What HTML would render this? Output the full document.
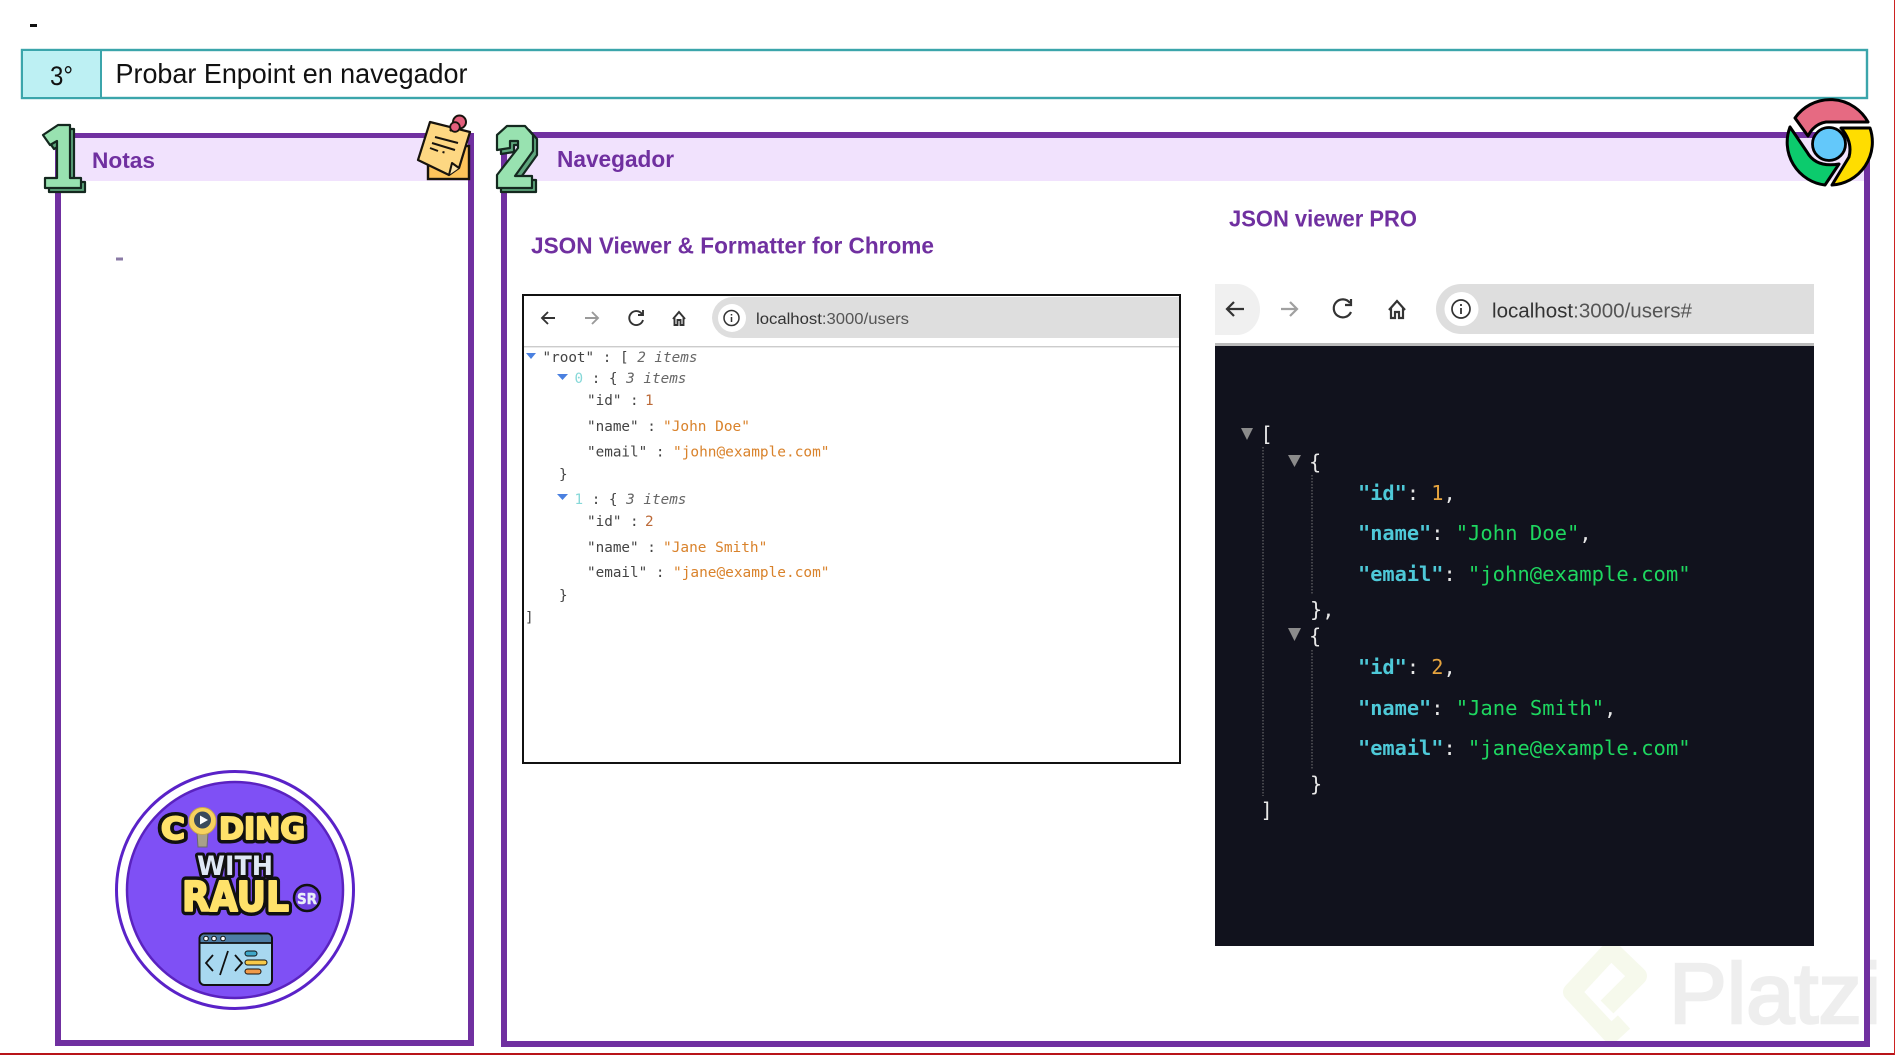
<!DOCTYPE html>
<html lang="es"><head><meta charset="utf-8"><title>Probar Enpoint en navegador</title>
<style>
html,body{margin:0;padding:0;background:#fff;width:1895px;height:1055px;overflow:hidden}
svg{display:block}
text{white-space:pre}
.s{font-family:"Liberation Sans",sans-serif}
.t{font-family:"Liberation Sans",sans-serif;font-weight:700;fill:#7030a0}
.m1{font-family:"DejaVu Sans Mono","Liberation Mono",monospace;font-size:14.3px;fill:#444}
.m2{font-family:"DejaVu Sans Mono","Liberation Mono",monospace;font-size:20.3px;fill:#e8e8e8}
.k{fill:#4ec9d8;font-weight:700}.g{fill:#1ed760;font-size:20.55px}.o{fill:#e5a33e}
.v{fill:#d9822b;font-size:14.45px}.n{fill:#bc6a38}.i{font-style:italic;fill:#666}
.lg{font-family:"DejaVu Sans","Liberation Sans",sans-serif;font-weight:700;stroke-linejoin:round}
.bk{fill:#111;stroke:#111}
</style></head><body>
<svg width="1895" height="1055" viewBox="0 0 1895 1055" xmlns="http://www.w3.org/2000/svg">
<rect width="1895" height="1055" fill="#fff"/>
<!-- platzi watermark -->
<path d="M1624 1022L1611 1034L1572 992L1611 950L1638 976L1607 1007" fill="none" stroke="#f6f9ec" stroke-width="18" stroke-linejoin="round"/>
<text x="1669" y="1023" class="s" font-size="85" fill="#eeeeee" stroke="#eeeeee" stroke-width="2.5" textLength="212" lengthAdjust="spacingAndGlyphs">Platzi</text>
<!-- edges -->
<rect x="0" y="1053" width="1895" height="2" fill="#b81419"/>
<rect x="1894" y="0" width="1" height="1055" fill="#c22"/>
<!-- top -->
<rect x="30" y="24" width="7" height="3" fill="#111"/>
<rect x="22" y="50" width="1845" height="48" fill="#fff" stroke="#3ba5ab" stroke-width="2.4"/>
<rect x="23" y="51" width="78" height="46" fill="#bdf0f3"/>
<rect x="100" y="50" width="2" height="48" fill="#3ba5ab"/>
<text x="50" y="85" class="s" font-size="27" fill="#111" textLength="23" lengthAdjust="spacingAndGlyphs">3°</text>
<text x="115.500" y="83" class="s" font-size="27.5" fill="#111" textLength="352" lengthAdjust="spacingAndGlyphs">Probar Enpoint en navegador</text>
<!-- notes panel -->
<rect x="58" y="136" width="413" height="907" fill="none" stroke="#7030a0" stroke-width="6"/>
<rect x="61" y="138" width="407" height="43" fill="#f1e2fd"/>
<text x="92" y="168" class="t" font-size="22" textLength="63" lengthAdjust="spacingAndGlyphs">Notas</text>
<rect x="116" y="257.500" width="7" height="3" fill="#8a7aa5"/>
<!-- nav panel -->
<rect x="504" y="135" width="1363" height="909" fill="none" stroke="#7030a0" stroke-width="6"/>
<rect x="507" y="138" width="1357" height="43" fill="#f1e2fd"/>
<text x="557" y="167" class="t" font-size="23" textLength="117" lengthAdjust="spacingAndGlyphs">Navegador</text>
<text x="531" y="253.500" class="t" font-size="23" textLength="403" lengthAdjust="spacingAndGlyphs">JSON Viewer &amp; Formatter for Chrome</text>
<text x="1229" y="226.500" class="t" font-size="23" textLength="188" lengthAdjust="spacingAndGlyphs">JSON viewer PRO</text>

<!-- number 1 -->
<g stroke="#14281f" stroke-width="2.2" stroke-linejoin="round">
<path d="M47 139L62 129L74 129L74 182L85 182L85 192L49 192L49 182L61 182L61 145L54 149Z" fill="#5ea67d"/>
<path d="M43 135L58 125L70 125L70 178L81 178L81 188L45 188L45 178L57 178L57 141L50 145Z" fill="#98e2b0"/>
</g>
<!-- number 2 -->
<g stroke="#14281f" stroke-width="2.2" stroke-linejoin="round">
<path d="M501 154L501 139L511 130L529 130L537 139L537 155L519 180L536 180L536 192L501 192L501 179L522 152L522 145L514 145L514 152Z" fill="#5ea67d"/>
<path d="M497 150L497 135L507 126L525 126L533 135L533 151L515 176L532 176L532 188L497 188L497 175L518 148L518 141L510 141L510 148Z" fill="#98e2b0"/>
</g>
<!-- sticky note -->
<rect x="428" y="146" width="41" height="33" fill="#fdc45b" stroke="#17130d" stroke-width="2.4"/>
<path d="M430 122L470 132L459 168L449 175L418 160Z" fill="#fdd782" stroke="#17130d" stroke-width="2.2" stroke-linejoin="round"/>
<path d="M449 175L452 163L459 168" fill="#fbe3a8" stroke="#17130d" stroke-width="2" stroke-linejoin="round"/>
<path d="M435 137L458 143M432 143L455 150M430 148L438 151M442.500 152L444.500 152.500" stroke="#17130d" stroke-width="2" fill="none"/>
<path d="M450 131L456 125" stroke="#17130d" stroke-width="2.5"/>
<circle cx="459.500" cy="122" r="6.500" fill="#e35f7d" stroke="#17130d" stroke-width="2"/>
<circle cx="455" cy="127" r="4.800" fill="#e35f7d" stroke="#17130d" stroke-width="1.800"/>
<!-- chrome -->
<g stroke="#000" stroke-width="3" stroke-linejoin="round">
<path d="M1795 118A43 43 0 0 1 1868 122L1826 122Q1814 124 1808 136Z" fill="#e66a82"/>
<path d="M1870 128A43 43 0 0 1 1832 185L1849 157Q1853 142 1841 128Z" fill="#ffdd00"/>
<path d="M1790 127A43 43 0 0 0 1825 185L1839 164Q1816 168 1807 152Z" fill="#0ccb6d"/>
</g>
<circle cx="1829" cy="144" r="16.500" fill="#63c8fa" stroke="#000" stroke-width="2.800"/>

<!-- left browser -->
<rect x="523" y="295" width="657" height="468" fill="#fff" stroke="#111" stroke-width="2"/>
<path d="M712 318A21 21 0 0 1 733 297H1179V338H733A21 21 0 0 1 712 318Z" fill="#dedede"/>
<circle cx="732" cy="318" r="14" fill="#fff"/>
<circle cx="731.5" cy="318" r="7.5" fill="none" stroke="#333" stroke-width="1.5"/>
<path d="M731.5 317V322M731.5 314V315.5" stroke="#333" stroke-width="1.5"/>
<rect x="524" y="346" width="655" height="1.4" fill="#ccc"/>
<g fill="none" stroke="#333" stroke-width="1.9">
<path d="M555 318H542M548 312L542 318L548 324"/>
<path d="M585 318H598M592 312L598 318L592 324" stroke="#9a9a9a"/>
<path d="M642 314A7 7 0 1 0 643 320M643 310V315H638"/>
<path d="M673 319L679 312L685 319M674.500 318V325H677.500V320H680.500V325H683.500V318"/>
</g>
<text x="756" y="324" class="s" font-size="15.500" fill="#333" textLength="153" lengthAdjust="spacingAndGlyphs">localhost<tspan fill="#555">:3000/users</tspan></text>
<path d="M526 353H536L531 359Z" fill="#4a80e0"/>
<path d="M557 374H568L562.500 380Z" fill="#4a80e0"/>
<path d="M557 494H568L562.500 500Z" fill="#4a80e0"/>
<g class="m1">
<text class="m1" x="542.500" y="362">"root" : [ <tspan class="i">2 items</tspan></text>
<text class="m1" x="574.500" y="383"><tspan fill="#86d8d8">0</tspan> : { <tspan class="i">3 items</tspan></text>
<text class="m1" x="587" y="405">"id" :<tspan x="645" class="n">1</tspan></text>
<text class="m1" x="587" y="431">"name" :<tspan x="663" class="v">"John Doe"</tspan></text>
<text class="m1" x="587" y="456.500">"email" :<tspan x="673" class="v">"john@example.com"</tspan></text>
<text class="m1" x="559" y="479">}</text>
<text class="m1" x="574.500" y="504"><tspan fill="#86d8d8">1</tspan> : { <tspan class="i">3 items</tspan></text>
<text class="m1" x="587" y="526">"id" :<tspan x="645" class="n">2</tspan></text>
<text class="m1" x="587" y="552">"name" :<tspan x="663" class="v">"Jane Smith"</tspan></text>
<text class="m1" x="587" y="577">"email" :<tspan x="673" class="v">"jane@example.com"</tspan></text>
<text class="m1" x="559" y="600">}</text>
<text class="m1" x="525" y="622">]</text>
</g>

<!-- right browser -->
<path d="M1215 284H1237A23 25.500 0 0 1 1237 335H1215Z" fill="#f0f0f0"/>
<path d="M1436 309A25 25 0 0 1 1461 284H1814V334H1461A25 25 0 0 1 1436 309Z" fill="#dedede"/>
<circle cx="1461.500" cy="309" r="17" fill="#fff"/>
<circle cx="1461" cy="309" r="9" fill="none" stroke="#333" stroke-width="1.700"/>
<path d="M1461 308V314M1461 304V306" stroke="#333" stroke-width="1.800"/>
<rect x="1215" y="343" width="599" height="3" fill="#bbb"/>
<g fill="none" stroke="#333" stroke-width="2.200">
<path d="M1244 309H1227M1234 302L1227 309L1234 316"/>
<path d="M1281 309H1297M1290 302L1297 309L1290 316" stroke="#a0a0a0"/>
<path d="M1350 303A9 9 0 1 0 1351 312M1351 299V305H1345"/>
<path d="M1389 310L1397 301L1405 310M1391 308V318H1395V312H1399V318H1403V308"/>
</g>
<text x="1492" y="317.500" class="s" font-size="20.500" fill="#333" textLength="200" lengthAdjust="spacingAndGlyphs">localhost<tspan fill="#555">:3000/users#</tspan></text>
<rect x="1215" y="346" width="599" height="600" fill="#11121d"/>
<path d="M1263 447V796M1312 475V595M1312 650V770" stroke="#777" stroke-width="1" stroke-dasharray="1.500 1.500" fill="none"/>
<path d="M1241 428H1253L1247 440Z M1288 455H1301L1294.500 467Z M1288 628H1301L1294.500 641Z" fill="#8b8b8b"/>
<g>
<text class="m2" x="1260.500" y="441">[</text>
<text class="m2" x="1309" y="469">{</text>
<text class="m2" x="1358" y="500"><tspan class="k">"id"</tspan>: <tspan class="o">1</tspan>,</text>
<text class="m2" x="1358" y="540"><tspan class="k">"name"</tspan>: <tspan class="g">"John Doe"</tspan>,</text>
<text class="m2" x="1358" y="581"><tspan class="k">"email"</tspan>: <tspan class="g">"john@example.com"</tspan></text>
<text class="m2" x="1310" y="616.500">},</text>
<text class="m2" x="1309" y="643">{</text>
<text class="m2" x="1358" y="674"><tspan class="k">"id"</tspan>: <tspan class="o">2</tspan>,</text>
<text class="m2" x="1358" y="715"><tspan class="k">"name"</tspan>: <tspan class="g">"Jane Smith"</tspan>,</text>
<text class="m2" x="1358" y="755"><tspan class="k">"email"</tspan>: <tspan class="g">"jane@example.com"</tspan></text>
<text class="m2" x="1310" y="791">}</text>
<text class="m2" x="1260.500" y="817">]</text>
</g>

<!-- logo -->
<circle cx="235" cy="890" r="118.500" fill="#fff" stroke="#5a22c8" stroke-width="3"/>
<circle cx="235" cy="890" r="108" fill="#7f50f5" stroke="#5a22c0" stroke-width="2.500"/>
<g class="lg" font-size="30">
<text x="161" y="839" class="lg bk" font-size="30" stroke-width="9" textLength="24" lengthAdjust="spacingAndGlyphs">C</text>
<text x="219" y="839" class="lg bk" font-size="30" stroke-width="9" textLength="86" lengthAdjust="spacingAndGlyphs">DING</text>
<text x="161" y="839" class="lg" font-size="30" fill="#ffe26a" stroke="#ffe26a" stroke-width="2" textLength="24" lengthAdjust="spacingAndGlyphs">C</text>
<text x="219" y="839" class="lg" font-size="30" fill="#ffe26a" stroke="#ffe26a" stroke-width="2" textLength="86" lengthAdjust="spacingAndGlyphs">DING</text>
</g>
<path d="M197 833H208L207 847H198Z" fill="#a8a08a" stroke="#6a6a6a"/>
<circle cx="202.500" cy="821" r="13.500" fill="#f7d25e" stroke="#c9a84a" stroke-width="1"/>
<circle cx="202.500" cy="820" r="8.500" fill="#3a4a5c"/>
<path d="M200 815.500L208 820L200 824.500Z" fill="#fff"/>
<text x="197" y="875" class="lg bk" font-size="27" stroke-width="6" textLength="76" lengthAdjust="spacingAndGlyphs">WITH</text>
<text x="197" y="875" class="lg" font-size="27" fill="#dfe8f5" textLength="76" lengthAdjust="spacingAndGlyphs">WITH</text>
<text x="182" y="911" class="lg bk" font-size="41" stroke-width="9" textLength="107" lengthAdjust="spacingAndGlyphs">RAUL</text>
<text x="182" y="911" class="lg" font-size="41" fill="#ffe26a" stroke="#ffe26a" stroke-width="2" textLength="107" lengthAdjust="spacingAndGlyphs">RAUL</text>
<circle cx="307" cy="898" r="13" fill="#6f3fe0" stroke="#111" stroke-width="2.500"/>
<text x="297" y="904" class="lg" font-size="15" fill="#e8eef8" stroke="#e8eef8" stroke-width=".5" textLength="20" lengthAdjust="spacingAndGlyphs">SR</text>
<rect x="199.500" y="933.500" width="72.500" height="51.500" rx="5" fill="#a8d8f0" stroke="#111" stroke-width="2"/>
<path d="M200.500 943V938.500A4 4 0 0 1 204.500 934.500H267A4 4 0 0 1 271 938.500V943Z" fill="#4d7da5"/>
<path d="M200 943H272" stroke="#111" stroke-width="1.800"/>
<circle cx="206" cy="938.500" r="2.300" fill="#fff" stroke="#111"/><circle cx="214" cy="938.500" r="2.300" fill="#fff" stroke="#111"/><circle cx="223" cy="938.500" r="2.300" fill="#fff" stroke="#111"/>
<path d="M213 955L206 963L213 971M228 951L220 975M235 955L242 963L235 971" fill="none" stroke="#111" stroke-width="1.800"/>
<rect x="245" y="951" width="12" height="5" rx="2.500" fill="#3fa7c8" stroke="#111"/>
<rect x="245" y="960" width="22" height="5" rx="2.500" fill="#f7c948" stroke="#111"/>
<rect x="245" y="969" width="16" height="5" rx="2.500" fill="#f09a4a" stroke="#111"/>
</svg>
</body></html>
